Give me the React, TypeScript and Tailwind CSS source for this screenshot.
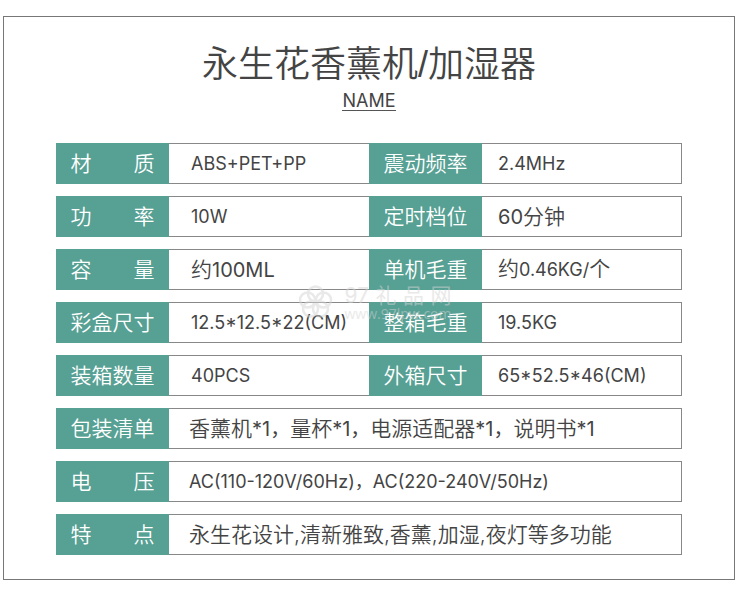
import type { ReactNode } from "react";

const Num = ({ children }: { children: ReactNode }) => (
  <span className="text-[18px] font-normal">{children}</span>
);

const Big = ({ children }: { children: ReactNode }) => (
  <span className="text-[20px] font-normal">{children}</span>
);

type Spec = { label: string; value: ReactNode };

const pairs: [Spec, Spec][] = [
  [
    { label: "材质", value: <Num>ABS+PET+PP</Num> },
    { label: "震动频率", value: <Num>2.4MHz</Num> },
  ],
  [
    { label: "功率", value: <Num>10W</Num> },
    { label: "定时档位", value: <><Big>60</Big>分钟</> },
  ],
  [
    { label: "容量", value: <>约<Big>100ML</Big></> },
    { label: "单机毛重", value: <>约<Num>0.46KG/</Num>个</> },
  ],
  [
    { label: "彩盒尺寸", value: <Num>12.5*12.5*22(CM)</Num> },
    { label: "整箱毛重", value: <Num>19.5KG</Num> },
  ],
  [
    { label: "装箱数量", value: <Num>40PCS</Num> },
    { label: "外箱尺寸", value: <Num>65*52.5*46(CM)</Num> },
  ],
];

const wide: Spec[] = [
  {
    label: "包装清单",
    value: (
      <>
        香薰机<Big>*1，</Big>量杯<Big>*1，</Big>电源适配器<Big>*1，</Big>说明书<Big>*1</Big>
      </>
    ),
  },
  { label: "电压", value: <Num>AC(110-120V/60Hz)，AC(220-240V/50Hz)</Num> },
  { label: "特点", value: "永生花设计,清新雅致,香薰,加湿,夜灯等多功能" },
];

// two-character labels are spread to the width of four
const Label = ({ text }: { text: string }) => (
  <th scope="row" className="h-[41px] bg-[#57a094] p-0 font-[350] text-white">
    <span className="mx-auto flex w-[84px] justify-between text-[21px] leading-6">
      {text.length === 2 ? text.split("").map((c) => <span key={c}>{c}</span>) : text}
    </span>
  </th>
);

const Watermark = () => (
  <div className="pointer-events-none absolute top-[284px] left-1/2 flex -translate-x-1/2 items-center gap-3 text-[#d4d4d4] opacity-50">
    <svg width="34" height="34" viewBox="0 0 34 34" fill="none" stroke="currentColor" strokeWidth="2.5">
      <circle cx="17" cy="9" r="7.5" />
      <circle cx="25" cy="15" r="7.5" />
      <circle cx="22" cy="24" r="7.5" />
      <circle cx="12" cy="24" r="7.5" />
      <circle cx="9" cy="15" r="7.5" />
    </svg>
    <div>
      <div className="flex justify-between text-[21px] leading-6 font-normal">
        <span>97</span>
        <span>礼</span>
        <span>品</span>
        <span>网</span>
      </div>
      <div className="font-['Open_Sans'] text-[14px] leading-3 font-normal">www.97lpw.com</div>
    </div>
  </div>
);

export default function App() {
  return (
    <div className="relative bg-white pt-4 pr-[15px] pb-6 pl-[3px] font-['Inter','Noto_Sans_CJK_SC',sans-serif] font-[350] text-[#444]">
      <main className="border border-[#777] px-[52px] pt-6 pb-3">
        <h1 className="text-center font-['Liberation_Sans','Noto_Sans_CJK_SC',sans-serif] text-[36px] leading-12 font-[350]">
          永生花香薰机/加湿器
        </h1>
        <p className="text-center">
          <span className="inline-block border-b border-[#555] text-[18px] leading-[19px] font-normal">NAME</span>
        </p>

        <table className="mt-[18px] w-full table-fixed border-separate border-spacing-x-0 border-spacing-y-3 text-left">
          <colgroup>
            <col className="w-[113px]" />
            <col />
            <col className="w-[113px]" />
            <col />
          </colgroup>
          <tbody className="text-[21px] leading-6">
            {pairs.map(([a, b]) => (
              <tr key={a.label}>
                <Label text={a.label} />
                <td className="border-y border-[#888] py-0 pr-0 pl-[22px]">{a.value}</td>
                <Label text={b.label} />
                <td className="border border-l-0 border-[#888] py-0 pr-0 pl-4">{b.value}</td>
              </tr>
            ))}
            {wide.map((row) => (
              <tr key={row.label}>
                <Label text={row.label} />
                <td colSpan={3} className="border border-l-0 border-[#888] py-0 pr-0 pl-5">
                  {row.value}
                </td>
              </tr>
            ))}
          </tbody>
        </table>
      </main>
      <Watermark />
    </div>
  );
}
